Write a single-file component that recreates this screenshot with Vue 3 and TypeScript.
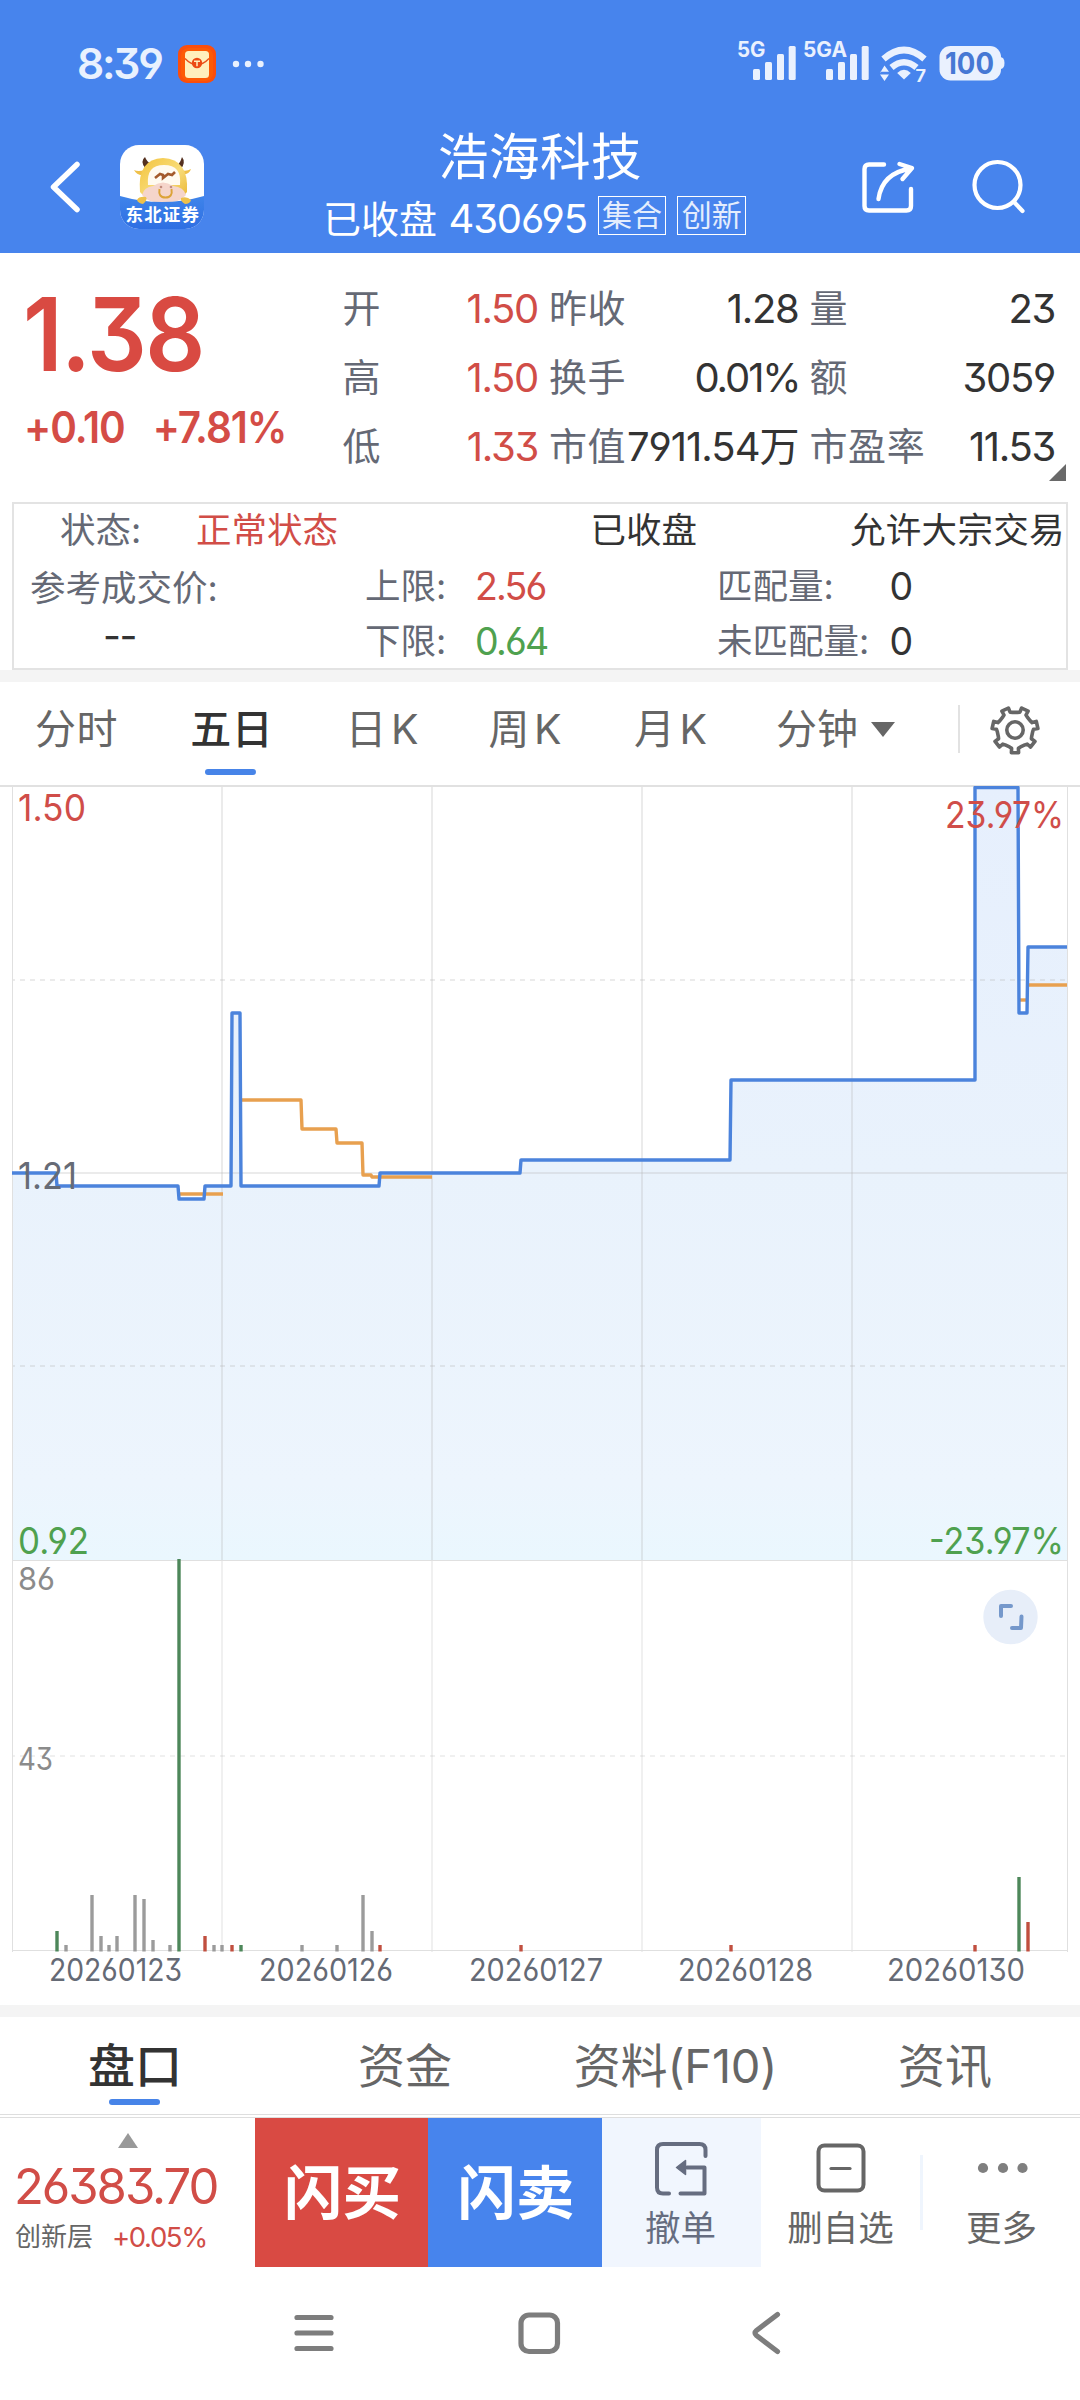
<script setup lang="ts">
interface Cell { label: string; value: string; tone?: 'up'; tight?: boolean; pct?: boolean }
interface Bar { x: number; top: number; tone: 'up' | 'down' | 'flat' }

const columns: Cell[][] = [
  [
    { label: '开', value: '1.50', tone: 'up' },
    { label: '高', value: '1.50', tone: 'up' },
    { label: '低', value: '1.33', tone: 'up' },
  ],
  [
    { label: '昨收', value: '1.28' },
    { label: '换手', value: '0.01%', pct: true },
    { label: '市值', value: '7911.54万', tight: true },
  ],
  [
    { label: '量', value: '23' },
    { label: '额', value: '3059' },
    { label: '市盈率', value: '11.53' },
  ],
]

const periods = ['分时', '五日', '日K', '周K', '月K']
const infoTabs = ['盘口', '资金', '资料(F10)', '资讯']

// Chart geometry: the price panel spans 0-774, the volume panel 774-1165.
const gridX = [222, 432, 642, 852]
const priceLine =
  '12,387 56,387 57,400 178,400 179,413 204,413 205,400 231,400 232,227 240,227 241,400 379,400 380,387 ' +
  '520,387 521,374 730,374 731,294 975,294 975,1.5 1018,1.5 1019,227 1027,227 1028,161 1067,161'
const areaPoints = `${priceLine} 1067,774 12,774`
const averageLines = [
  '179,408 223,408',
  '241,314 301,314 302,343 336,343 337,357 362,357 363,389 371,389 372,391 432,391',
  '1019,214 1027,214',
  '1028,199 1067,199',
]
const bars: Bar[] = [
  { x: 57, top: 1145, tone: 'down' },
  { x: 66, top: 1159, tone: 'flat' },
  { x: 92, top: 1109, tone: 'flat' },
  { x: 101, top: 1150, tone: 'flat' },
  { x: 109, top: 1159, tone: 'flat' },
  { x: 117, top: 1150, tone: 'flat' },
  { x: 135, top: 1109, tone: 'flat' },
  { x: 144, top: 1113, tone: 'flat' },
  { x: 153, top: 1154, tone: 'flat' },
  { x: 170, top: 1159, tone: 'flat' },
  { x: 179, top: 773, tone: 'down' },
  { x: 205, top: 1150, tone: 'up' },
  { x: 214, top: 1159, tone: 'flat' },
  { x: 222, top: 1159, tone: 'flat' },
  { x: 232, top: 1159, tone: 'up' },
  { x: 241, top: 1159, tone: 'down' },
  { x: 302, top: 1159, tone: 'flat' },
  { x: 337, top: 1159, tone: 'flat' },
  { x: 363, top: 1109, tone: 'flat' },
  { x: 372, top: 1145, tone: 'flat' },
  { x: 380, top: 1159, tone: 'up' },
  { x: 521, top: 1159, tone: 'up' },
  { x: 731, top: 1159, tone: 'up' },
  { x: 975, top: 1159, tone: 'up' },
  { x: 1019, top: 1091, tone: 'down' },
  { x: 1028, top: 1136, tone: 'up' },
]
const dates = [
  { x: 49, w: 133, text: '20260123' },
  { x: 259, w: 134, text: '20260126' },
  { x: 469, w: 134, text: '20260127' },
  { x: 678, w: 135, text: '20260128' },
  { x: 887, w: 138, text: '20260130' },
]

// Seven-toothed cog outline around (26, 26), one tooth pointing down.
const cog = Array.from({ length: 7 }, (_, i) => {
  const centre = 90 + (i * 360) / 7
  return [[-18, 17.8], [-10.5, 18.6], [-9, 23], [9, 23], [10.5, 18.6], [18, 17.8]].map(([a, r]) => {
    const rad = ((centre + a) * Math.PI) / 180
    return `${(26 + r * Math.cos(rad)).toFixed(1)},${(26 + r * Math.sin(rad)).toFixed(1)}`
  })
}).flat().join(' ')
</script>

<template>
  <div class="screen">
    <header class="top">
      <div class="status">
        <span class="clock">8:39</span>
        <svg class="packet" width="38" height="38" viewBox="0 0 38 38">
          <rect width="38" height="38" rx="9" fill="#fb4e0c" />
          <rect x="3" y="3" width="32" height="33" rx="8" fill="#ff6a00" opacity=".45" />
          <rect x="7" y="6" width="24" height="27" rx="3.5" fill="#ffefbd" />
          <path d="M7 13.5 Q19 26 31 13.5" fill="none" stroke="#e8501c" stroke-width="1.4" />
          <circle cx="19" cy="18" r="5.2" fill="#ec4a14" />
          <path d="M16 16.2h6M19 16.2v5" stroke="#ffefbd" stroke-width="1.5" />
        </svg>
        <svg class="more" width="34" height="10" viewBox="0 0 34 10">
          <circle cx="5" cy="5" r="3.2" /><circle cx="17" cy="5" r="3.2" /><circle cx="29.500" cy="5" r="3.2" />
        </svg>
        <svg class="signals" width="270" height="68" viewBox="736 30 270 68">
          <g fill="#eaf1fe">
            <text x="737" y="57" font-size="21" font-weight="700" textLength="28.500" lengthAdjust="spacingAndGlyphs">5G</text>
            <rect x="753" y="69" width="7" height="11" rx="1.500" /><rect x="765" y="62" width="7" height="18" rx="1.500" />
            <rect x="777" y="54" width="7" height="26" rx="1.500" /><rect x="788.700" y="46" width="7" height="34" rx="1.500" />
            <text x="803" y="57" font-size="21" font-weight="700" textLength="44" lengthAdjust="spacingAndGlyphs">5GA</text>
            <rect x="826" y="69" width="7" height="11" rx="1.500" /><rect x="838" y="62" width="7" height="18" rx="1.500" />
            <rect x="850" y="54" width="7" height="26" rx="1.500" /><rect x="861.700" y="46" width="7" height="34" rx="1.500" />
            <path d="M904 79.500 L897.200 73 Q904 66.500 910.800 73 Z" />
            <path d="M880 73 L884.500 65.500 L889 71.800 H880 Z M880 74.500 H889 L884.500 81 Z" />
            <text x="915.500" y="82" font-size="17" font-weight="700" textLength="10.500" lengthAdjust="spacingAndGlyphs">7</text>
            <rect x="939.500" y="46" width="61.500" height="34.500" rx="11" />
            <path d="M1000 57 q4.500 0 4.500 6 q0 6 -4.500 6z" />
          </g>
          <g fill="none" stroke="#eaf1fe" stroke-width="6.500">
            <path d="M883.500 59 Q904 41 924.500 59" /><path d="M891.500 67.500 Q904 57 916.500 67.500" />
          </g>
          <text x="945" y="73.500" font-size="29.500" font-weight="700" fill="#4678d4" textLength="49" lengthAdjust="spacingAndGlyphs">100</text>
        </svg>
      </div>

      <div class="nav">
        <div class="nav-left">
          <svg width="36" height="56" viewBox="0 0 36 56">
            <path d="M31 5.500 L7.500 28 L31 50.500" fill="none" stroke="#fff" stroke-width="5.500" stroke-linecap="round" stroke-linejoin="round" />
          </svg>
          <svg class="broker" width="84" height="84" viewBox="0 0 84 84">
            <defs>
              <clipPath id="tile"><rect width="84" height="84" rx="19" /></clipPath>
              <linearGradient id="hide" x1="0" y1="0" x2="1" y2="1">
                <stop offset="0" stop-color="#f3c33c" /><stop offset=".55" stop-color="#f8dc7a" /><stop offset="1" stop-color="#e9b32c" />
              </linearGradient>
              <linearGradient id="ground" x1="0" y1="0" x2="0" y2="1">
                <stop offset="0" stop-color="#3f84ea" /><stop offset="1" stop-color="#2e6fe3" />
              </linearGradient>
            </defs>
            <g clip-path="url(#tile)">
              <rect width="84" height="84" fill="#fff" />
              <path d="M25 23 Q20 16 25 12 Q27 17 31 19Z M58 20 Q61 16 62 12 Q66 17 61 24Z" fill="#54301f" />
              <path d="M25 25 Q18 27 14 25 Q17 31 24 30Z M61 25 Q66 27 71 24 Q69 30 63 29Z" fill="#efc04a" />
              <path d="M20 47 Q17 14 43 13 Q69 14 67 47 Q60 57 43 57 Q27 57 20 47Z" fill="url(#hide)" />
              <path d="M28 40 Q26 20 44 20 Q62 20 60 40Z" fill="#fffaf0" />
              <path d="M22 50 Q24 42 33 41 Q43 34 53 41 Q64 42 66 50 Q60 58 43 58 Q28 58 22 50Z" fill="#f5d5cb" />
              <path d="M35 33 L40 29 L43 30 L43 33 L48 29 L52 30 L55 27" fill="none" stroke="#a45a2c" stroke-width="2.600" />
              <path d="M39.500 44 Q38 52.500 45.500 52.500 Q53 52.500 51.500 44" fill="none" stroke="#dca338" stroke-width="2" />
              <circle cx="41" cy="42" r="1.300" fill="#c18b7e" /><circle cx="51" cy="42" r="1.300" fill="#c18b7e" />
              <path d="M0 51 Q42 63 84 51 V84 H0Z" fill="url(#ground)" />
              <path d="M17 55 Q19 51 26 52 Q28 55 23 59 Q18 58 17 55Z M61 53 Q67 51 71 55 Q70 59 65 59 Q60 56 61 53Z" fill="#eec14a" />
              <text x="5.500" y="75.500" font-size="17.500" font-weight="700" fill="#fff" textLength="73.500">东北证券</text>
            </g>
          </svg>
        </div>
        <div class="heading">
          <h1>浩海科技</h1>
          <div class="sub">
            <span class="state">已收盘</span><span class="code">430695</span>
            <span class="tag">集合</span><span class="tag">创新</span>
          </div>
        </div>
        <div class="nav-right">
          <svg width="60" height="60" viewBox="0 0 60 60" fill="none" stroke="#fff" stroke-width="4.400" stroke-linecap="round" stroke-linejoin="round">
            <path d="M28 7.500 H13 Q8.500 7.500 8.500 12 V49 Q8.500 53.500 13 53.500 H50.500 Q55 53.500 55 49 V32" />
            <path d="M22.500 42 Q26 16 55 11.500 M43.500 7 L56 11 L46.500 22" />
          </svg>
          <svg width="60" height="60" viewBox="0 0 60 60" fill="none" stroke="#fff" stroke-width="4.200" stroke-linecap="round">
            <circle cx="28.500" cy="28" r="23" /><path d="M45 45 L53.500 54" />
          </svg>
        </div>
      </div>
    </header>

    <section class="quote">
      <div class="last">
        <div class="price">1.38</div>
        <div class="change"><span>+0.10</span><span>+7.81%</span></div>
      </div>
      <div v-for="(col, i) in columns" :key="i" class="col" :class="`c${i}`">
        <div v-for="c in col" :key="c.label" class="cell">
          <span class="label">{{ c.label }}</span>
          <span class="value" :class="{ up: c.tone === 'up', tight: c.tight, pct: c.pct }">{{ c.value }}</span>
        </div>
      </div>
      <i class="corner"></i>
    </section>

    <section class="detail">
      <div class="d-head">
        <span class="k">状态:</span><span class="v up">正常状态</span><span class="v closed">已收盘</span><span class="v block">允许大宗交易</span>
      </div>
      <div class="d-body">
        <div class="ref-price"><span class="k">参考成交价:</span><span class="dash">--</span></div>
        <div class="pairs limits">
          <div><span class="k">上限:</span><span class="n up">2.56</span></div>
          <div><span class="k">下限:</span><span class="n down">0.64</span></div>
        </div>
        <div class="pairs match">
          <div><span class="k">匹配量:</span><span class="n">0</span></div>
          <div><span class="k">未匹配量:</span><span class="n">0</span></div>
        </div>
      </div>
    </section>

    <nav class="periods">
      <span v-for="(p, i) in periods" :key="p" class="period" :class="[`p${i}`, { on: i === 1 }]">{{ p }}</span>
      <span class="period minutes">分钟<i class="caret"></i></span>
      <i class="sep"></i>
      <svg width="52" height="52" viewBox="0 0 52 52" fill="none" stroke="#666" stroke-width="3.600" stroke-linejoin="round">
        <polygon :points="cog" /><circle cx="26" cy="26" r="8.200" />
      </svg>
    </nav>

    <section class="chart">
      <svg width="1080" height="1218" viewBox="0 0 1080 1218">
        <defs>
          <linearGradient id="fill" gradientUnits="userSpaceOnUse" x1="0" y1="0" x2="0" y2="774">
            <stop offset="0" stop-color="#e6effd" /><stop offset=".5" stop-color="#e9f2fc" /><stop offset=".9" stop-color="#edf5fd" /><stop offset="1" stop-color="#eaf7fe" />
          </linearGradient>
        </defs>
        <polygon :points="areaPoints" fill="url(#fill)" />
        <g stroke="#b4b4b4" stroke-opacity=".27" stroke-width="2">
          <line v-for="x in gridX" :key="x" :x1="x" :x2="x" y1="1" y2="774" />
          <line v-for="x in gridX" :key="`v${x}`" :x1="x" :x2="x" y1="774" y2="1166" stroke-opacity=".2" />
          <line x1="12" x2="1068" y1="387" y2="387" />
          <line v-for="y in [194, 580]" :key="y" x1="12" x2="1068" :y1="y" :y2="y" stroke-dasharray="5 5" stroke-dashoffset="2" />
          <line x1="12" x2="1068" y1="970" y2="970" stroke-dasharray="5 5" stroke-dashoffset="2" stroke-opacity=".2" />
        </g>
        <g stroke="#e0e0e0" stroke-width="1">
          <line x1="12.500" x2="12.500" y1="1" y2="1166" /><line x1="1067.500" x2="1067.500" y1="1" y2="1166" />
          <line x1="12" x2="1068" y1="774.500" y2="774.500" /><line x1="12" x2="1068" y1="1164.500" y2="1164.500" />
        </g>
        <g fill="none" stroke-width="3.400" stroke-linejoin="round">
          <polyline v-for="l in averageLines" :key="l" :points="l" stroke="#e8a04f" />
          <polyline :points="priceLine" stroke="#4b83dc" />
        </g>
        <line v-for="b in bars" :key="b.x" :x1="b.x" :x2="b.x" :y1="b.top" y2="1165.500" class="bar" :class="b.tone" />
        <g class="axis" font-size="37">
          <text x="18" y="35" textLength="68" lengthAdjust="spacingAndGlyphs" fill="#d04d49">1.50</text>
          <text x="945" y="42" textLength="119" lengthAdjust="spacingAndGlyphs" fill="#d04d49">23.97%</text>
          <text x="18" y="403" textLength="59" lengthAdjust="spacingAndGlyphs" fill="#666b76">1.21</text>
          <text x="18" y="768" textLength="71" lengthAdjust="spacingAndGlyphs" fill="#4fa14f">0.92</text>
          <text x="929" y="768" textLength="135" lengthAdjust="spacingAndGlyphs" fill="#4fa14f">-23.97%</text>
        </g>
        <g class="axis" font-size="31">
          <text x="18" y="804" textLength="37" lengthAdjust="spacingAndGlyphs" fill="#8b8b8b">86</text>
          <text x="18" y="984" textLength="35" lengthAdjust="spacingAndGlyphs" fill="#8b8b8b">43</text>
          <text v-for="d in dates" :key="d.text" :x="d.x" y="1195" :textLength="d.w" lengthAdjust="spacingAndGlyphs" fill="#656a75">{{ d.text }}</text>
        </g>
        <circle cx="1010.500" cy="831" r="27.200" fill="#e7eef9" />
        <g fill="none" stroke="#7598cb" stroke-width="4" stroke-linecap="round" stroke-linejoin="round">
          <path d="M1001 830 V820 H1011" /><path d="M1021.500 830.500 L1021 842 H1012" />
        </g>
      </svg>
    </section>

    <nav class="info">
      <span v-for="(t, i) in infoTabs" :key="t" class="tab" :class="{ on: i === 0 }">{{ t }}</span>
    </nav>

    <footer class="actions">
      <div class="index">
        <i class="arrow"></i>
        <span class="points">26383.70</span>
        <div class="layer"><span>创新层</span><span class="rate">+0.05%</span></div>
      </div>
      <button class="trade buy">闪买</button>
      <button class="trade sell">闪卖</button>
      <div class="act cancel">
        <svg width="60" height="60" viewBox="0 0 60 60" fill="none" stroke="#666d80" stroke-width="4" stroke-linecap="round" stroke-linejoin="round">
          <path d="M18 55.500 H12 Q6 55.500 6 49.500 V12 Q6 6 12 6 H48.500 Q54.500 6 54.500 12 V18" />
          <path d="M29.500 55.500 H53.500 V29.500 H36" />
          <path d="M25.500 29.500 L34.500 22.500 V36.500Z" fill="#666d80" stroke-width="1.500" />
        </svg>
        <span>撤单</span>
      </div>
      <div class="act remove">
        <svg width="60" height="60" viewBox="0 0 60 60" fill="none" stroke="#666" stroke-width="4" stroke-linecap="round">
          <rect x="7.500" y="7.500" width="45" height="45" rx="6" /><path d="M20 30.500 H39" stroke-width="3.200" />
        </svg>
        <span>删自选</span>
      </div>
      <i class="rule"></i>
      <div class="act others">
        <svg width="60" height="60" viewBox="0 0 60 60" fill="#7f7f7f">
          <circle cx="11" cy="30" r="5.100" /><circle cx="31" cy="30" r="5.100" /><circle cx="50.500" cy="30" r="5.100" />
        </svg>
        <span>更多</span>
      </div>
    </footer>

    <div class="system">
      <svg width="48" height="48" viewBox="0 0 48 48"><path d="M7 8.500H41M7 24H41M7 39.500H41" /></svg>
      <svg width="48" height="48" viewBox="0 0 48 48"><rect x="6" y="6" width="36.500" height="36.500" rx="8" /></svg>
      <svg width="48" height="48" viewBox="0 0 48 48"><path d="M37.500 5.500 L16.500 21.500 Q13.500 24 16.500 26.500 L37.500 42.500" /></svg>
    </div>
  </div>
</template>

<style>
body { background: #fff; }
</style>

<style scoped>
.screen {
  width: 1080px;
  height: 2400px;
  overflow: hidden;
  background: #fff;
  color: #333;
  font-family: Inter, "Noto Sans CJK SC", sans-serif;
  font-feature-settings: "cv03", "cv04", "cv09";
  white-space: nowrap;
}
svg { display: block; flex: none; }
.up { color: #d14d47; }
.down { color: #4fa14f; }

.top { height: 253px; background: #4784ed; color: #fff; }
.status { height: 123px; box-sizing: border-box; padding: 5px 74px 0 77px; display: flex; align-items: center; }
.clock { width: 101px; font-size: 42.500px; font-weight: 600; line-height: 50px; letter-spacing: -2.200px; margin-top: -1px; color: #e9f1fe; }
.more { margin-left: 15px; fill: #eaf1fe; }
.signals { margin-left: auto; }

.nav { height: 128px; display: grid; grid-template-columns: 324px 432px 324px; align-items: center; }
.nav-left { display: flex; align-items: center; padding-left: 45.500px; }
.broker { margin-left: 38.500px; }
.heading h1 { margin: 0; font-size: 50.500px; font-weight: 400; line-height: 64px; padding-top: 2px; height: 62px; text-align: center; letter-spacing: .5px; }
.sub { height: 64px; display: flex; align-items: center; line-height: 64px; }
.state { font-size: 38px; width: 126px; margin-left: -1px; }
.code { font-size: 40px; letter-spacing: -1.100px; width: 149px; }
.tag { width: 69px; height: 39px; margin: -7px 11px 0 0; box-sizing: border-box; border: 1.500px solid #fff; font-size: 30px; line-height: 37px; text-align: center; color: #e4edfd; position: relative; left: 1px; }
.nav-right { display: flex; justify-content: flex-end; gap: 53px; padding-right: 51px; }

.quote { position: relative; height: 249px; box-sizing: border-box; padding: 20px 25px 0 23px; display: flex; align-items: flex-start; }
.last { width: 320px; color: #d94a42; }
.price { font-size: 102px; font-weight: 600; line-height: 122px; letter-spacing: -1.800px; transform: scaleX(.92); transform-origin: 0 0; }
.change { display: flex; font-size: 43.500px; font-weight: 600; line-height: 64px; letter-spacing: -1.100px; color: #d44c46; transform: scaleX(.93); transform-origin: 0 0; padding-left: 1px; }
.change span:first-child { width: 138.500px; }
.col { font-size: 38px; line-height: 69px; padding-top: 1px; }
.cell { display: flex; justify-content: space-between; }
.c0 { width: 196px; }
.c1 { width: 250px; margin-left: 11px; }
.c2 { width: 246px; margin-left: 11px; }
.label { color: #656975; letter-spacing: .6px; }
.value { font-size: 40px; letter-spacing: -1.300px; }
.c1 .pct { letter-spacing: -2.100px; margin-right: -1px; }
.c1 .tight { letter-spacing: -1px; }
.corner { position: absolute; right: 14px; top: 211px; border-left: 17px solid transparent; border-bottom: 17px solid #696969; }

.detail { height: 168px; box-sizing: border-box; margin: 0 12px; border: 2px solid #e3e3e3; font-size: 35.500px; }
.k { color: #656975; }
.d-head { display: flex; height: 54px; line-height: 54px; padding-left: 46px; }
.d-head .k { width: 136px; }
.d-head .up { width: 394.500px; }
.d-head .closed { width: 259.500px; }
.d-head .block { letter-spacing: .3px; }
.d-body { display: flex; }
.ref-price { width: 334px; padding: 4px 0 0 16px; line-height: 54px; }
.ref-price span { display: block; }
.ref-price .dash { line-height: 40px; padding-left: 73px; font-size: 39px; letter-spacing: -1.500px; }
.pairs { line-height: 55px; padding-top: 1px; }
.pairs > div { display: flex; }
.limits { width: 352px; padding-left: 17px; margin-left: -16px; }
.limits .k { width: 110px; }
.match .k { width: 172.500px; }
.n { font-size: 37.500px; letter-spacing: -1.800px; }

.periods { height: 117px; box-sizing: border-box; border-top: 12px solid #f4f4f4; border-bottom: 2px solid #e1e1e1; display: flex; align-items: center; padding-bottom: 9px; }
.period { position: relative; font-size: 41px; line-height: 60px; color: #666; }
.p0 { margin-left: 35px; letter-spacing: .6px; }
.p1 { margin-left: 72px; letter-spacing: .6px; }
.p2 { margin-left: 72px; }
.p3 { margin-left: 65.500px; }
.p4 { margin-left: 68px; }
.p2, .p3, .p4 { letter-spacing: 4.500px; }
.period.on { color: #333; font-weight: 500; }
.period.on::after { content: ""; position: absolute; left: 50%; bottom: -16px; width: 51px; height: 6px; margin-left: -27px; border-radius: 3px; background: #4784e8; }
.minutes { margin-left: 64.500px; display: flex; align-items: center; }
.caret { margin-left: 13px; border: 12px solid transparent; border-top: 15px solid #666; border-bottom: 0; }
.sep { width: 2px; height: 48px; margin-left: 63px; background: #e2e2e2; }
.periods svg { margin-left: 29px; margin-top: 2px; }

.chart { height: 1218px; margin-top: -1px; }
.bar { stroke-width: 3.400px; stroke-linecap: butt; }
.bar.up { stroke: #c14f3f; }
.bar.down { stroke: #4d875a; }
.bar.flat { stroke: #9b9b9b; }

.info { height: 110px; margin-top: 1px; box-sizing: border-box; border-top: 12px solid #f4f4f4; border-bottom: 1px solid #dedede; display: grid; grid-template-columns: repeat(4, 270px); }
.tab { position: relative; text-align: center; font-size: 47px; line-height: 98px; height: 97px; color: #666; }
.tab:nth-child(3) { padding-left: 1px; letter-spacing: -.2px; }
.tab.on { color: #333; font-weight: 500; }
.tab.on::after { content: ""; position: absolute; left: 109px; top: 82px; width: 51px; height: 6px; border-radius: 3px; background: #4784e8; }

.actions { display: flex; height: 150px; margin-top: 2px; box-sizing: border-box; border-top: 1px solid #dedede; }
.index { width: 255px; box-sizing: border-box; padding-left: 15px; display: flex; flex-direction: column; align-items: flex-start; }
.arrow { margin: 15px 0 0 103px; border: 10px solid transparent; border-bottom: 15px solid #999; border-top: 0; }
.points { font-size: 49px; line-height: 60px; margin: 9px 0 0 -1px; letter-spacing: -2.050px; color: #d14d47; }
.layer { display: flex; font-size: 26px; line-height: 36px; margin-top: 2px; color: #666; }
.layer .rate { margin-left: 19px; color: #d14d47; font-size: 27.500px; letter-spacing: -1.400px; }
.trade { border: 0; padding: 0 0 0 2px; box-sizing: border-box; color: #fff; font: 700 58.500px/146px Inter, "Noto Sans CJK SC", sans-serif; text-align: center; }
.buy { width: 173px; background: #d94a43; }
.sell { width: 174px; background: #4784ed; }
.act { display: flex; flex-direction: column; align-items: center; font-size: 35.500px; color: #666; }
.act svg { margin-top: 20px; }
.act span { line-height: 44px; margin-top: 9px; }
.cancel { width: 159px; box-sizing: border-box; padding-right: 2px; background: #f1f6fe; color: #666d80; }
.remove { width: 159px; }
.rule { width: 3px; height: 75px; margin-top: 37px; background: #eff5fd; }
.others { width: 157px; }

.system { display: flex; gap: 177px; padding-left: 290px; height: 132px; align-items: center; }
.system svg { fill: none; stroke: #7d7d7d; stroke-width: 5.200; stroke-linecap: round; stroke-linejoin: round; }
</style>
